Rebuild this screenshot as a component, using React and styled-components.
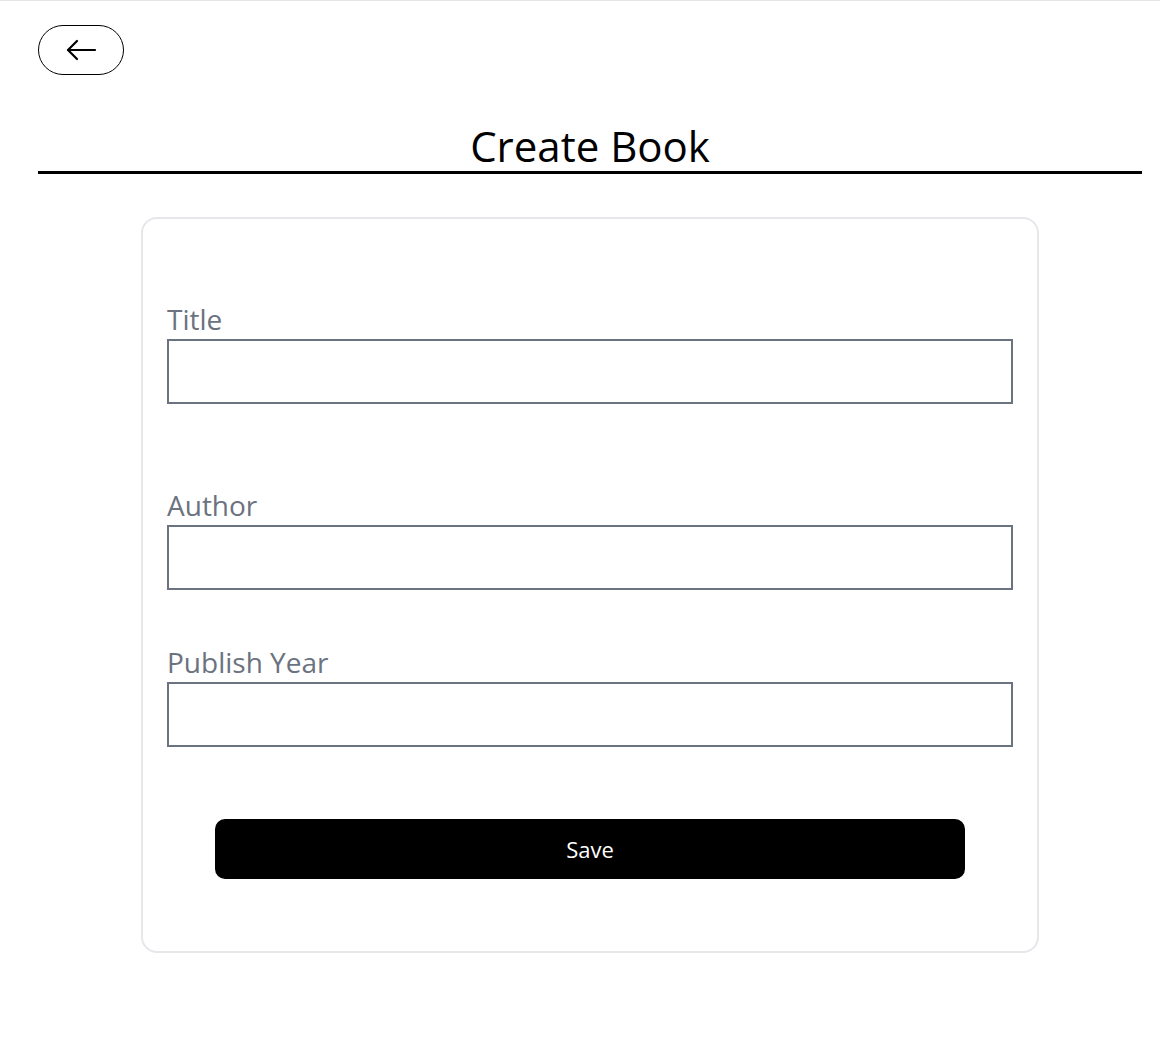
import React from "react";
import styled, { createGlobalStyle } from "styled-components";

const Global = createGlobalStyle`
  html, body { margin: 0; padding: 0; background: #fff; }
  body {
    font-family: "Open Sans", "Noto Sans", "Liberation Sans", sans-serif;
    border-top: 1px solid #e5e5e5;
  }
  * { box-sizing: border-box; }
`;

const Page = styled.main`
  padding: 24px 18px 40px 38px;
`;

const BackButton = styled.button`
  width: 86px;
  height: 50px;
  border: 1px solid #000;
  border-radius: 25px;
  background: #fff;
  display: flex;
  align-items: center;
  justify-content: center;
  padding: 0;
  cursor: pointer;
`;

const Heading = styled.h1`
  margin: 46px 0 0;
  font-size: 42px;
  font-weight: 400;
  line-height: 50px;
  text-align: center;
  color: #000;
  border-bottom: 3px solid #000;
`;

const Card = styled.form`
  width: 898px;
  margin: 43px auto 0;
  border: 2px solid #e5e7eb;
  border-radius: 16px;
  padding: 82px 24px 72px;
  display: flex;
  flex-direction: column;
`;

const Field = styled.div`
  display: flex;
  flex-direction: column;
  margin-top: ${(p) => p.$gap || 0}px;
`;

const Label = styled.label`
  font-size: 28px;
  line-height: 36px;
  color: #6b7280;
  margin-bottom: 2px;
`;

const Input = styled.input`
  height: 65px;
  width: 100%;
  border: 2px solid #6b7280;
  padding: 0 12px;
  font-size: 20px;
  outline: none;
  background: #fff;
`;

const SaveButton = styled.button`
  align-self: center;
  width: 750px;
  height: 60px;
  margin-top: 72px;
  background: #000;
  color: #fff;
  border: none;
  border-radius: 10px;
  font-family: inherit;
  font-size: 22px;
  cursor: pointer;
`;

export default function App() {
  return (
    <>
      <Global />
      <Page>
        <BackButton aria-label="Back">
          <svg width="32" height="24" viewBox="0 0 32 24" fill="none" stroke="#000" strokeWidth="2.2" strokeLinecap="round" strokeLinejoin="round">
            <path d="M30 12H3" />
            <path d="M12 3L3 12L12 21" />
          </svg>
        </BackButton>
        <Heading>Create Book</Heading>
        <Card onSubmit={(e) => e.preventDefault()}>
          <Field>
            <Label>Title</Label>
            <Input type="text" />
          </Field>
          <Field $gap={83}>
            <Label>Author</Label>
            <Input type="text" />
          </Field>
          <Field $gap={54}>
            <Label>Publish Year</Label>
            <Input type="number" />
          </Field>
          <SaveButton type="submit">Save</SaveButton>
        </Card>
      </Page>
    </>
  );
}
